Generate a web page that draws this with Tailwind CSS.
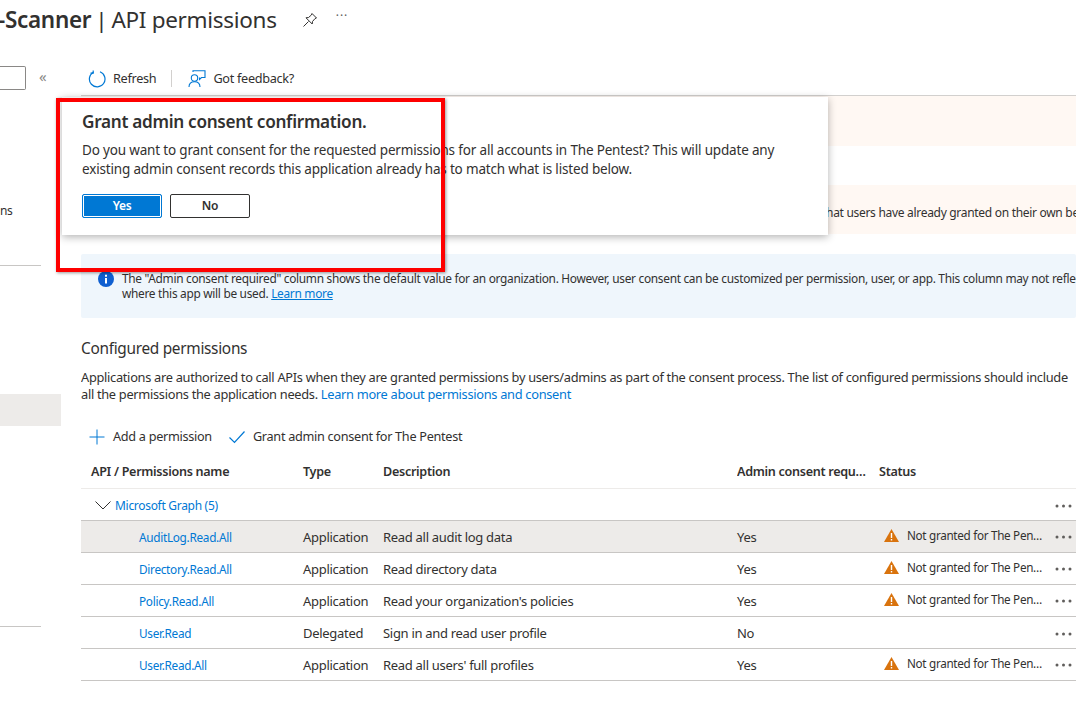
<!DOCTYPE html>
<html lang="en">
  <head>
    <meta charset="UTF-8" />
    <title>API permissions</title>
    <script src="https://cdn.jsdelivr.net/npm/@tailwindcss/browser@4"></script>
  </head>
  <body class="relative h-[710px] w-[1076px] overflow-hidden bg-white font-['Noto_Sans',sans-serif] text-[13px] tracking-[-0.3px] text-[#323130]">
    <!-- title -->
    <div class="flex h-[40px] items-center whitespace-nowrap text-[22.5px]">
      <span class="-ml-[2px] font-semibold">-Scanner</span>
      <span class="ml-[4px]">|</span>
      <span class="ml-[4px]">API permissions</span>
      <svg class="ml-[25px]" width="16" height="16" viewBox="0 0 16 16" fill="none" stroke="#323130" stroke-width="1"><path d="M10 1.500 14.500 6 13 6.600 10.500 9.500 10.200 12 4 5.800 6.500 5.500 9.400 3z" /><path d="M6.500 9.500 1.500 14.500" /></svg>
      <span class="ml-[18px] pb-[8px] text-[12px] tracking-[1px] text-[#605e5c]">···</span>
    </div>

    <div class="flex">
      <!-- sidebar -->
      <aside class="h-[670px] w-[81px] shrink-0">
        <div class="mt-[26px] flex items-center">
          <div class="h-[24px] w-[26px] rounded-r-[2px] border border-l-0 border-[#8a8886]"></div>
          <span class="ml-[13px] pb-[3px] text-[15px] leading-none text-[#8a8886]">«</span>
        </div>
        <div class="mt-[112px] h-[18px] text-[12px] leading-[18px]">ns</div>
        <div class="mt-[45px] h-px w-[41px] bg-[#c8c6c4]"></div>
        <div class="mt-[128px] h-[32px] w-[61px] bg-[#edebe9]"></div>
        <div class="mt-[200px] h-px w-[41px] bg-[#c8c6c4]"></div>
      </aside>

      <!-- content -->
      <main class="min-w-0 flex-1 overflow-hidden">
        <div class="flex h-[56px] items-center whitespace-nowrap border-b border-[#d2d0ce] pt-[22px] text-[12.7px]">
          <svg class="ml-[7px]" width="18" height="18" viewBox="0 0 18 18" fill="none" stroke="#0078d4" stroke-width="1.2"><path d="M5.500 2.200A7.800 7.800 0 1 0 12 1.800" /><path d="M5.200 0.500V3.200H2.500" /></svg>
          <span class="ml-[7px]">Refresh</span>
          <div class="ml-[15px] h-[17px] w-px bg-[#d2d0ce]"></div>
          <svg class="ml-[16px]" width="18" height="18" viewBox="0 0 18 18" fill="none" stroke="#0078d4" stroke-width="1.1"><circle cx="6.500" cy="8" r="3.200" /><path d="M1 17c0-3.500 2.500-5.300 5.500-5.300S12 13.500 12 17" /><path d="M5 2V0.800H17V7.500H13.500L11.500 9.500V7.500" /></svg>
          <span class="ml-[7px]">Got feedback?</span>
        </div>

        <div class="h-[50px] bg-[#fff8f3]"></div>
        <div class="mt-[39px] flex h-[49px] items-center whitespace-nowrap bg-[#fff8f3] pl-[741px] pt-[6px] text-[12px]">that users have already granted on their own behalf</div>
        <div class="relative mt-[20px] h-[64px] overflow-hidden whitespace-nowrap rounded-[2px] bg-[#eff6fc] pl-[41px] pt-[17px] text-[11.9px] leading-[15px]">
          <svg class="absolute left-[17px] top-[17px]" width="16" height="16" viewBox="0 0 16 16"><circle cx="8" cy="8" r="8" fill="#0f5fd0" /><rect x="7" y="7" width="2" height="5.500" fill="#fff" /><rect x="7" y="3.700" width="2" height="2" fill="#fff" /></svg>
          <p>The "Admin consent required" column shows the default value for an organization. However, user consent can be customized per permission, user, or app. This column may not reflect the value in your organization</p>
          <p>where this app will be used. <a class="text-[#0078d4] underline">Learn more</a></p>
        </div>

        <h2 class="mt-[21px] h-[20px] text-[15.4px] leading-[20px]">Configured permissions</h2>
        <div class="mt-[10px] whitespace-nowrap text-[12.82px] leading-[17px]">
          <p>Applications are authorized to call APIs when they are granted permissions by users/admins as part of the consent process. The list of configured permissions should include</p>
          <p>all the permissions the application needs. <a class="text-[#0078d4]">Learn more about permissions and consent</a></p>
        </div>

        <div class="mt-[23px] flex h-[22px] items-center whitespace-nowrap text-[12.7px]">
          <svg class="ml-[8px]" width="16" height="16" viewBox="0 0 16 16" stroke="#0078d4" stroke-width="1"><path d="M8 0.500V15.500M0.500 8H15.500" /></svg>
          <span class="ml-[8px]">Add a permission</span>
          <svg class="ml-[17px]" width="16" height="14" viewBox="0 0 16 14" fill="none" stroke="#0078d4" stroke-width="1.2"><path d="M0.500 7.500 5.500 12.500 15.500 1.500" /></svg>
          <span class="ml-[8px]">Grant admin consent for The Pentest</span>
        </div>

        <!-- permissions table -->
        <div class="mt-[8px] whitespace-nowrap">
          <div class="grid h-[33px] grid-cols-[222px_80px_354px_142px_1fr] items-center border-b border-[#edebe9] text-[12.6px] font-semibold">
            <span class="pl-[10px]">API / Permissions name</span>
            <span>Type</span>
            <span>Description</span>
            <span class="w-[132px] truncate">Admin consent required</span>
            <span>Status</span>
          </div>
          <div class="flex h-[32px] items-center border-b border-[#c8c6c4] pl-[14px] pt-[2px]">
            <svg width="16" height="9" viewBox="0 0 16 9" fill="none" stroke="#323130" stroke-width="1"><path d="M0.500 0.500 8 8 15.500 0.500" /></svg>
            <a class="ml-[4px] text-[12px] text-[#0078d4]">Microsoft Graph (5)</a>
            <svg class="ml-auto mr-[4px]" width="17" height="4" viewBox="0 0 17 4" fill="#605e5c"><circle cx="2" cy="2" r="1.500" /><circle cx="8.500" cy="2" r="1.500" /><circle cx="15" cy="2" r="1.500" /></svg>
          </div>
          <div class="grid h-[32px] grid-cols-[58px_164px_80px_354px_142px_1fr] items-center border-b border-[#c8c6c4] bg-[#edebe9] pt-[2px]">
            <span></span>
            <a class="text-[11.8px] text-[#0078d4]">AuditLog.Read.All</a>
            <span>Application</span>
            <span>Read all audit log data</span>
            <span>Yes</span>
            <div class="flex items-center">
              <svg class="mb-[3px] ml-[5px]" width="15" height="13" viewBox="0 0 15 13"><path d="M7.500 0 15 13H0z" fill="#d9730d" /><rect x="6.800" y="4" width="1.400" height="5" fill="#fff" /><rect x="6.800" y="10" width="1.400" height="1.500" fill="#fff" /></svg>
              <span class="ml-[8px] w-[138px] truncate pb-[3px] text-[11.7px]">Not granted for The Pentest</span>
              <svg class="ml-[10px]" width="17" height="4" viewBox="0 0 17 4" fill="#605e5c"><circle cx="2" cy="2" r="1.500" /><circle cx="8.500" cy="2" r="1.500" /><circle cx="15" cy="2" r="1.500" /></svg>
            </div>
          </div>
          <div class="grid h-[32px] grid-cols-[58px_164px_80px_354px_142px_1fr] items-center border-b border-[#c8c6c4] pt-[2px]">
            <span></span>
            <a class="text-[11.8px] text-[#0078d4]">Directory.Read.All</a>
            <span>Application</span>
            <span>Read directory data</span>
            <span>Yes</span>
            <div class="flex items-center">
              <svg class="mb-[3px] ml-[5px]" width="15" height="13" viewBox="0 0 15 13"><path d="M7.500 0 15 13H0z" fill="#d9730d" /><rect x="6.800" y="4" width="1.400" height="5" fill="#fff" /><rect x="6.800" y="10" width="1.400" height="1.500" fill="#fff" /></svg>
              <span class="ml-[8px] w-[138px] truncate pb-[3px] text-[11.7px]">Not granted for The Pentest</span>
              <svg class="ml-[10px]" width="17" height="4" viewBox="0 0 17 4" fill="#605e5c"><circle cx="2" cy="2" r="1.500" /><circle cx="8.500" cy="2" r="1.500" /><circle cx="15" cy="2" r="1.500" /></svg>
            </div>
          </div>
          <div class="grid h-[32px] grid-cols-[58px_164px_80px_354px_142px_1fr] items-center border-b border-[#c8c6c4] pt-[2px]">
            <span></span>
            <a class="text-[11.8px] text-[#0078d4]">Policy.Read.All</a>
            <span>Application</span>
            <span>Read your organization's policies</span>
            <span>Yes</span>
            <div class="flex items-center">
              <svg class="mb-[3px] ml-[5px]" width="15" height="13" viewBox="0 0 15 13"><path d="M7.500 0 15 13H0z" fill="#d9730d" /><rect x="6.800" y="4" width="1.400" height="5" fill="#fff" /><rect x="6.800" y="10" width="1.400" height="1.500" fill="#fff" /></svg>
              <span class="ml-[8px] w-[138px] truncate pb-[3px] text-[11.7px]">Not granted for The Pentest</span>
              <svg class="ml-[10px]" width="17" height="4" viewBox="0 0 17 4" fill="#605e5c"><circle cx="2" cy="2" r="1.500" /><circle cx="8.500" cy="2" r="1.500" /><circle cx="15" cy="2" r="1.500" /></svg>
            </div>
          </div>
          <div class="grid h-[32px] grid-cols-[58px_164px_80px_354px_142px_1fr] items-center border-b border-[#c8c6c4] pt-[2px]">
            <span></span>
            <a class="text-[11.8px] text-[#0078d4]">User.Read</a>
            <span>Delegated</span>
            <span>Sign in and read user profile</span>
            <span>No</span>
            <div class="flex items-center">
              <svg class="ml-[176px]" width="17" height="4" viewBox="0 0 17 4" fill="#605e5c"><circle cx="2" cy="2" r="1.500" /><circle cx="8.500" cy="2" r="1.500" /><circle cx="15" cy="2" r="1.500" /></svg>
            </div>
          </div>
          <div class="grid h-[32px] grid-cols-[58px_164px_80px_354px_142px_1fr] items-center border-b border-[#c8c6c4] pt-[2px]">
            <span></span>
            <a class="text-[11.8px] text-[#0078d4]">User.Read.All</a>
            <span>Application</span>
            <span>Read all users' full profiles</span>
            <span>Yes</span>
            <div class="flex items-center">
              <svg class="mb-[3px] ml-[5px]" width="15" height="13" viewBox="0 0 15 13"><path d="M7.500 0 15 13H0z" fill="#d9730d" /><rect x="6.800" y="4" width="1.400" height="5" fill="#fff" /><rect x="6.800" y="10" width="1.400" height="1.500" fill="#fff" /></svg>
              <span class="ml-[8px] w-[138px] truncate pb-[3px] text-[11.7px]">Not granted for The Pentest</span>
              <svg class="ml-[10px]" width="17" height="4" viewBox="0 0 17 4" fill="#605e5c"><circle cx="2" cy="2" r="1.500" /><circle cx="8.500" cy="2" r="1.500" /><circle cx="15" cy="2" r="1.500" /></svg>
            </div>
          </div>
        </div>
      </main>
    </div>

    <!-- confirmation popup -->
    <div class="absolute left-[62px] top-[97px] h-[138px] w-[766px] bg-white pl-[20px] pt-[13px] shadow-[0_2px_8px_rgba(0,0,0,0.3)]">
      <h3 class="text-[17.2px] font-semibold leading-[24px]">Grant admin consent confirmation.</h3>
      <p class="mt-[7px] whitespace-nowrap text-[13.5px] leading-[19px] tracking-[-0.17px]">Do you want to grant consent for the requested permissions for all accounts in The Pentest? This will update any<br />existing admin consent records this application already has to match what is listed below.</p>
      <div class="mt-[15px] flex gap-[8px]">
        <button class="h-[24px] w-[80px] rounded-[2px] border border-[#0078d4] bg-[#0078d4] text-[12px] font-semibold text-white ring-1 ring-inset ring-white">Yes</button>
        <button class="h-[24px] w-[80px] rounded-[2px] border border-[#323130] bg-white text-[12px] font-semibold">No</button>
      </div>
    </div>

    <!-- red annotation -->
    <div class="absolute left-[56px] top-[98px] h-[174px] w-[389px] border-[4px] border-[#fe0000] shadow-[1px_1px_3px_rgba(0,0,0,0.4)]"></div>
  </body>
</html>
